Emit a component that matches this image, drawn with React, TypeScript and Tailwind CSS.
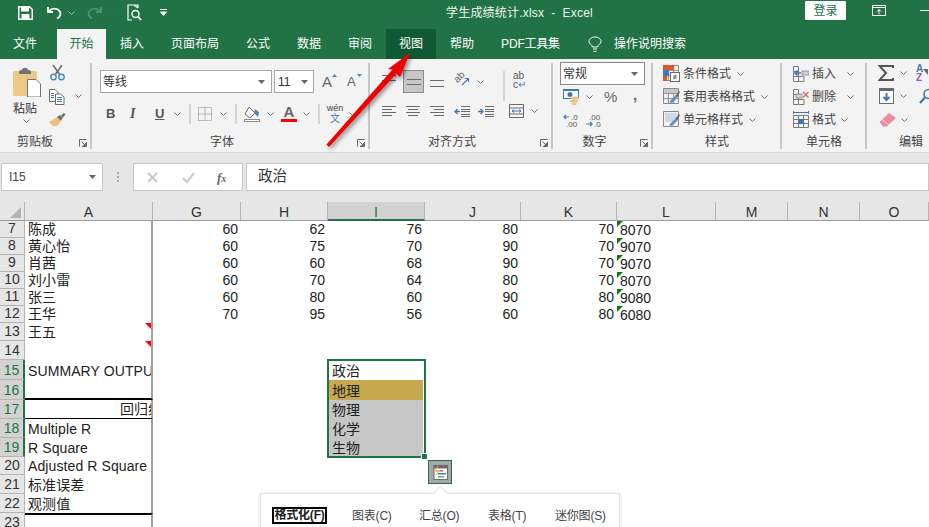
import type { ReactNode } from 'react';

const FONT = "font-['Liberation_Sans','Noto_Sans_CJK_SC',sans-serif]";

function Icon({ w, h, className = '', children }: { w: number; h: number; className?: string; children: ReactNode }) {
  return (
    <svg width={w} height={h} viewBox={`0 0 ${w} ${h}`} className={`shrink-0 block ${className}`} fill="none">
      {children}
    </svg>
  );
}

function Chevron({ className = '' }: { className?: string }) {
  return (
    <Icon w={7} h={4} className={className}>
      <path d="M0.5 0.5 L3.5 3.5 L6.5 0.5" stroke="#6a6a6a" strokeWidth="1" />
    </Icon>
  );
}

function Caret({ className = '' }: { className?: string }) {
  return (
    <Icon w={7} h={4} className={className}>
      <path d="M0 0 H7 L3.5 4 Z" fill="#666" />
    </Icon>
  );
}

function Launcher() {
  return (
    <Icon w={8} h={8}>
      <path d="M0.5 7.5 V0.5 H7.5 M7.5 3 V7.5 H3 M2.5 2.5 L6.5 6.5 M6.5 4 V6.5 H4" stroke="#666" strokeWidth="1" />
    </Icon>
  );
}

function Lines({ rows, color = '#6a6a6a' }: { rows: [number, number, number][]; color?: string }) {
  return (
    <>
      {rows.map(([x, y, w], i) => (
        <rect key={i} x={x} y={y} width={w} height={1} fill={color} />
      ))}
    </>
  );
}

function CellGrid({ w = 16, h = 16 }: { w?: number; h?: number }) {
  return <path d={`M0.5 0.5 H${w - 0.5} V${h - 0.5} H0.5 Z M0.5 ${h / 3} H${w - 0.5} M0.5 ${(h * 2) / 3} H${w - 0.5} M${w / 3} 0.5 V${h - 0.5} M${(w * 2) / 3} 0.5 V${h - 0.5}`} stroke="#8a8a8a" strokeWidth="1" />;
}

function Brush() {
  return (
    <>
      <path d="M6 14 L12 8 L14 10 L9 15 Z" fill="#5b8fc7" />
      <path d="M12 8 L16 3 L17 4 L14 10 Z" fill="#6a6a6a" />
    </>
  );
}

function TitleBar() {
  return (
    <div className="h-[29px] pb-[4px] bg-[#217346] flex items-center text-white text-[12px]">
      <Icon w={15} h={14} className="ml-[18px]">
        <path d="M0.75 0.75 H11.5 L14.25 3.5 V13.25 H0.75 Z" stroke="#fff" strokeWidth="1.5" />
        <rect x="3" y="1" width="8" height="4.5" fill="#fff" />
        <rect x="3.5" y="8" width="8" height="5" fill="#fff" />
      </Icon>
      <Icon w={15} h={13} className="ml-[14px]">
        <path d="M1 1 V6 H6 M1.5 5.5 C4 2 10 1.5 12.5 5 C14.5 8 13 11 10 12.5" stroke="#fff" strokeWidth="1.8" />
      </Icon>
      <Chevron className="ml-[6px] opacity-70 brightness-200" />
      <Icon w={15} h={13} className="ml-[12px]">
        <path d="M14 1 V6 H9 M13.5 5.5 C11 2 5 1.5 2.5 5 C0.5 8 2 11 5 12.5" stroke="#4f9270" strokeWidth="1.8" />
      </Icon>
      <Chevron className="ml-[6px] opacity-40" />
      <Icon w={15} h={17} className="ml-[12px]">
        <path d="M11 4 V1 H1 V16 H5 M7 1 L11 4" stroke="#fff" strokeWidth="1.2" />
        <circle cx="8.5" cy="10" r="3.5" stroke="#fff" strokeWidth="1.4" />
        <path d="M11 12.5 L14 16" stroke="#fff" strokeWidth="1.8" />
      </Icon>
      <Icon w={7} h={7} className="ml-[18px]">
        <path d="M0 0.5 H7 M0.5 3 H6.5 L3.5 6.5 Z" stroke="#fff" strokeWidth="1" fill="#fff" />
      </Icon>
      <span className="ml-[279px] w-[146px] whitespace-nowrap tracking-[0.2px] text-[#eef5f0]">学生成绩统计.xlsx&nbsp; -&nbsp; Excel</span>
      <button className="ml-[213px] w-[46px] h-[19px] -mt-[4px] bg-white text-[#217346] text-[12px] rounded-[1px]">登录</button>
      <Icon w={14} h={11} className="ml-[26px] -mt-[5px]">
        <path d="M0.5 0.5 H13.5 V10.5 H0.5 Z M0.5 2.5 H13.5 M7 9 V4.5 M5 6.5 L7 4.5 L9 6.5" stroke="#fff" strokeWidth="1" />
      </Icon>
      <span className="ml-[34px] -mt-[5px] w-[10px] h-px bg-white" />
    </div>
  );
}

const TABS = ['插入', '页面布局', '公式', '数据', '审阅'];

function Tabs() {
  return (
    <div className="h-[30px] bg-[#217346] flex text-white text-[12px] leading-[30px]">
      <span className="px-[13px]">文件</span>
      <span className="ml-[7px] w-[49px] text-center bg-[#f3f3f3] text-[#217346]">开始</span>
      {TABS.map((t) => (
        <span key={t} className="ml-px px-[13px]">{t}</span>
      ))}
      <span className="ml-px w-[50px] text-center bg-[#0f5a33]">视图</span>
      <span className="ml-px px-[13px]">帮助</span>
      <span className="ml-px w-[84px] pl-[13px] whitespace-nowrap tracking-[-0.2px]">PDF工具集</span>
      <Icon w={14} h={17} className="ml-[16px] mt-[7px]">
        <path d="M4.5 11 C4 8.5 1 8 1 5.5 C1 3 3.5 1 7 1 C10.5 1 13 3 13 5.5 C13 8 10 8.5 9.5 11 Z M5 13 H9 M5.5 15.5 H8.5" stroke="#fff" strokeWidth="1" />
      </Icon>
      <span className="ml-[12px]">操作说明搜索</span>
    </div>
  );
}

function GroupLabel({ label, launcher, className = '' }: { label: string; launcher?: boolean; className?: string }) {
  return (
    <div className="h-[13px] flex items-center text-[12px] leading-[13px] text-[#444]">
      <span className={`flex-1 text-center ${className}`}>{label}</span>
      {launcher && (
        <span className="mr-[3px] mt-px">
          <Launcher />
        </span>
      )}
    </div>
  );
}

function ClipboardGroup() {
  return (
    <div className="w-[92px] h-[86px] border-r-2 border-[#c6c6c6] flex flex-col">
      <div className="h-[73px] flex">
        <div className="w-[49px] pl-[13px] pt-[4px] flex flex-col">
          <Icon w={28} h={30}>
            <rect x="0" y="4" width="24" height="25" rx="1.5" fill="#edc987" />
            <path d="M6 5 C6 3 8 3 9 3 C9 0 15 0 15 3 C16 3 18 3 18 5 V7 H6 Z" fill="#737373" />
            <path d="M14.5 12.5 H23 L27.5 17 V30 H14.5 Z" fill="#fff" stroke="#737373" strokeWidth="1" />
          </Icon>
          <span className="text-[12px] leading-[14px] mt-[5px] text-[#333]">粘贴</span>
          <Chevron className="ml-[10px] mt-[3px]" />
        </div>
        <div className="flex flex-col">
          <Icon w={15} h={16} className="mt-[2px] ml-[1px]">
            <path d="M3 0 L10 10 M12 0 L5 10" stroke="#6a6a6a" strokeWidth="1.5" />
            <circle cx="3.5" cy="12" r="2.7" stroke="#4f86c0" strokeWidth="1.4" />
            <circle cx="11.5" cy="12" r="2.7" stroke="#4f86c0" strokeWidth="1.4" />
          </Icon>
          <div className="flex items-center mt-[8px]">
            <Icon w={16} h={16}>
              <path d="M0.5 0.5 H6 L9 3.5 V12.5 H0.5 Z" fill="#fff" stroke="#6a6a6a" />
              <path d="M6.5 5 H11.5 L15 8 V15.5 H6.5 Z" fill="#fff" stroke="#6a6a6a" />
              <Lines rows={[[2, 4, 3], [2, 6, 3], [2, 8, 3], [8, 8, 5], [8, 10, 5], [8, 12, 5]]} color="#3f78b5" />
            </Icon>
            <Chevron className="ml-[10px] -mt-[3px]" />
          </div>
          <Icon w={17} h={14} className="mt-[8px]">
            <path d="M0 9 L8 4 L12 8 L8 13 C5 14 2 12 0 9 Z" fill="#e8c27f" />
            <path d="M8 4 L11 2 L13.5 5 L12 8 Z" fill="#6a6a6a" />
            <path d="M12 2.5 L15 0 L16.5 1.5 L13.5 5 Z" fill="#6a6a6a" />
          </Icon>
        </div>
      </div>
      <GroupLabel label="剪贴板" launcher className="pr-[9px]" />
    </div>
  );
}

function FontGroup() {
  return (
    <div className="w-[278px] h-[86px] border-r-2 border-[#c6c6c6] flex flex-col">
      <div className="h-[73px] flex flex-col pt-[7px]">
        <div className="flex items-center h-[23px]">
          <div className="ml-[8px] w-[172px] h-[23px] bg-white border border-[#a6a6a6] flex items-center pl-[2px] pr-[6px] text-[12px] text-[#333]">
            <span className="flex-1">等线</span>
            <Caret />
          </div>
          <div className="ml-[2px] w-[40px] h-[23px] bg-white border border-[#a6a6a6] flex items-center pl-[3px] pr-[5px] text-[12px] text-[#333]">
            <span className="flex-1">11</span>
            <Caret />
          </div>
          <span className="ml-[8px] relative w-[14px] text-[15px] leading-[20px] text-[#666]">
            A
            <Icon w={5} h={3} className="absolute right-[-1px] top-[2px]"><path d="M0 3 L2.5 0 L5 3 Z" fill="#4f86c0" /></Icon>
          </span>
          <span className="ml-[11px] relative w-[12px] text-[13px] leading-[20px] text-[#666]">
            A
            <Icon w={5} h={3} className="absolute right-[-3px] top-[2px]"><path d="M0 0 L2.5 3 L5 0 Z" fill="#4f86c0" /></Icon>
          </span>
        </div>
        <div className="flex items-center h-[23px] mt-[9px] text-[#555]">
          <span className="ml-[14px] w-[9px] text-[13px] font-bold leading-none">B</span>
          <span className="ml-[15px] w-[8px] text-[14px] italic font-['Liberation_Serif',serif] font-bold leading-none">I</span>
          <span className="ml-[17px] w-[10px] text-[13px] font-bold underline leading-none">U</span>
          <Chevron className="ml-[9px]" />
          <span className="ml-[8px] h-[20px] w-[2px] bg-[#d4d4d4]" />
          <Icon w={14} h={14} className="ml-[7px]">
            <path d="M0.5 0.5 H13.5 V13.5 H0.5 Z M7 0.5 V13.5 M0.5 7 H13.5" stroke="#808080" strokeWidth="1" strokeDasharray="1 1" />
          </Icon>
          <Chevron className="ml-[8px]" />
          <span className="ml-[8px] h-[20px] w-[2px] bg-[#d4d4d4]" />
          <Icon w={16} h={16} className="ml-[7px]">
            <path d="M5 1 L11 7 L6 12 L1 8 Z" stroke="#6a6a6a" strokeWidth="1" fill="#fff" />
            <path d="M11 3 L15 6 L14 11 L10 7 Z" fill="#4f86c0" />
            <rect x="0.5" y="13.5" width="15" height="2" stroke="#8a8a8a" fill="#fff" />
          </Icon>
          <Chevron className="ml-[7px]" />
          <span className="ml-[7px] w-[16px] flex flex-col items-center">
            <span className="text-[15px] leading-[14px] font-bold text-[#666]">A</span>
            <span className="w-[16px] h-[3px] bg-[#ff0000]" />
          </span>
          <Chevron className="ml-[6px]" />
          <span className="ml-[8px] h-[20px] w-[2px] bg-[#d4d4d4]" />
          <span className="ml-[6px] w-[18px] flex flex-col items-center">
            <span className="text-[9px] leading-[10px] text-[#444]">wén</span>
            <span className="text-[10px] leading-[11px] text-[#3f78b5]">文</span>
          </span>
          <Chevron className="ml-[5px]" />
        </div>
      </div>
      <GroupLabel label="字体" launcher className="pr-[5px]" />
    </div>
  );
}

function AlignGroup() {
  return (
    <div className="w-[183px] h-[86px] border-r-2 border-[#c6c6c6] flex flex-col">
      <div className="h-[73px] flex flex-col pt-[7px]">
        <div className="flex items-center h-[23px]">
          <Icon w={14} h={14} className="ml-[12px] -mt-[9px]"><Lines rows={[[0, 5, 14], [0, 10, 14]]} /></Icon>
          <span className="ml-[7px] w-[21px] h-[23px] bg-[#c6c6c6] border border-[#8a8a8a] flex items-center justify-center">
            <Icon w={14} h={6}><Lines rows={[[0, 0, 14], [0, 5, 14]]} /></Icon>
          </span>
          <Icon w={14} h={8} className="ml-[6px] mt-[4px]"><Lines rows={[[0, 0, 14], [0, 6, 14]]} /></Icon>
          <Icon w={16} h={16} className="ml-[10px] -mt-[4px]">
            <text x="1" y="9" fontSize="10" fill="#666" fontFamily="Liberation Sans" transform="rotate(-45 5 7)">ab</text>
            <path d="M8 13 L14 7 M11 6.5 H14.5 V10" stroke="#3f78b5" strokeWidth="1.1" />
          </Icon>
          <Chevron className="ml-[7px]" />
          <span className="ml-[19px] h-[30px] w-[2px] bg-[#d4d4d4] mt-[8px]" />
          <span className="ml-[8px] w-[14px] flex flex-col text-[10px] leading-[9px] text-[#555] -mt-[4px]">
            <span>ab</span>
            <span>c<span className="text-[#3f78b5]">↵</span></span>
          </span>
        </div>
        <div className="flex items-center h-[14px] mt-[11px]">
          <Icon w={14} h={10} className="ml-[12px]"><Lines rows={[[0, 0, 14], [0, 3, 10], [0, 6, 14], [0, 9, 10]]} /></Icon>
          <Icon w={14} h={10} className="ml-[10px]"><Lines rows={[[0, 0, 14], [2, 3, 10], [0, 6, 14], [2, 9, 10]]} /></Icon>
          <Icon w={14} h={10} className="ml-[10px]"><Lines rows={[[0, 0, 14], [4, 3, 10], [0, 6, 14], [4, 9, 10]]} /></Icon>
          <Icon w={16} h={11} className="ml-[10px]">
            <Lines rows={[[7, 0, 9], [7, 5, 9], [7, 10, 9], [7, 3, 9], [7, 8, 9]]} />
            <path d="M6 5.5 H1 M3.5 3 L1 5.5 L3.5 8" stroke="#3f78b5" strokeWidth="1.3" />
          </Icon>
          <Icon w={16} h={11} className="ml-[8px]">
            <Lines rows={[[7, 0, 9], [7, 5, 9], [7, 10, 9], [7, 3, 9], [7, 8, 9]]} />
            <path d="M0 5.5 H5 M2.5 3 L5 5.5 L2.5 8" stroke="#3f78b5" strokeWidth="1.3" />
          </Icon>
          <Icon w={15} h={14} className="ml-[15px]">
            <path d="M0.5 0.5 H14.5 V13.5 H0.5 Z M0.5 4 H14.5 M0.5 10 H14.5" stroke="#6a6a6a" strokeWidth="1" />
            <path d="M3 7 H12 M5 5.5 L3 7 L5 8.5 M10 5.5 L12 7 L10 8.5" stroke="#3f78b5" strokeWidth="1" />
          </Icon>
          <Chevron className="ml-[7px]" />
        </div>
      </div>
      <GroupLabel label="对齐方式" launcher className="pr-[6px]" />
    </div>
  );
}

function NumberGroup() {
  return (
    <div className="w-[100px] h-[86px] border-r-2 border-[#c6c6c6] flex flex-col">
      <div className="h-[73px] flex flex-col">
        <div className="ml-[7px] mt-[-1px] w-[85px] h-[23px] bg-white border border-[#8a8a8a] flex items-center pl-[2px] pr-[6px] text-[12px] text-[#333]">
          <span className="flex-1">常规</span>
          <Caret />
        </div>
        <div className="flex items-center h-[17px] mt-[3px]">
          <Icon w={16} h={16} className="ml-[10px]">
            <rect x="0.5" y="0.5" width="15" height="9" stroke="#3f78b5" fill="#fff" />
            <rect x="0" y="0" width="16" height="2" fill="#3f78b5" />
            <circle cx="7" cy="5.5" r="2.5" fill="#3f78b5" />
            <ellipse cx="12" cy="9" rx="4" ry="1.6" fill="#edc07a" />
            <ellipse cx="11" cy="12" rx="4" ry="1.6" fill="#edc07a" />
            <ellipse cx="11" cy="15" rx="3" ry="1" fill="#edc07a" />
          </Icon>
          <Chevron className="ml-[7px]" />
          <span className="ml-[11px] w-[14px] text-[15px] leading-none text-[#666]">%</span>
          <span className="ml-[15px] text-[15px] font-bold leading-none text-[#666] -mt-[4px]">,</span>
        </div>
        <div className="flex items-center h-[15px] mt-[8px]">
          <Icon w={16} h={15} className="ml-[10px]">
            <path d="M6 4 H1 M3 2 L1 4 L3 6" stroke="#3f78b5" strokeWidth="1.2" />
            <text x="8" y="7" fontSize="8" fill="#555" fontFamily="Liberation Sans">.0</text>
            <text x="3" y="14" fontSize="8" fill="#555" fontFamily="Liberation Sans">.00</text>
          </Icon>
          <Icon w={16} h={15} className="ml-[7px]">
            <text x="3" y="7" fontSize="8" fill="#555" fontFamily="Liberation Sans">.00</text>
            <path d="M0 11 H6 M4 9 L6 11 L4 13" stroke="#3f78b5" strokeWidth="1.2" />
            <text x="8" y="14" fontSize="8" fill="#555" fontFamily="Liberation Sans">.0</text>
          </Icon>
        </div>
      </div>
      <GroupLabel label="数字" launcher className="pr-[4px]" />
    </div>
  );
}

function StyleRow({ icon, label }: { icon: ReactNode; label: string }) {
  return (
    <div className="flex items-center h-[23px] text-[12px] text-[#444]">
      {icon}
      <span className="ml-[3px] mr-[6px]">{label}</span>
      <Chevron />
    </div>
  );
}

function StyleGroup() {
  return (
    <div className="w-[129px] h-[86px] border-r-2 border-[#c6c6c6] flex flex-col">
      <div className="h-[73px] pl-[10px] flex flex-col">
        <div className="-mt-px flex flex-col">
          <StyleRow
            label="条件格式"
            icon={
              <Icon w={17} h={17}>
                <CellGrid />
                <rect x="0" y="0" width="11" height="5" fill="#d9582f" />
                <rect x="0" y="5" width="6" height="6" fill="#3f78b5" />
                <rect x="0" y="11" width="4" height="5" fill="#d9582f" />
                <rect x="7.5" y="7.5" width="9" height="9" fill="#fff" stroke="#6a6a6a" />
                <path d="M10 11 H14 M10 13 H14 M13 9.5 L11 14.5" stroke="#555" strokeWidth="0.8" />
              </Icon>
            }
          />
          <StyleRow
            label="套用表格格式"
            icon={
              <Icon w={17} h={17}>
                <CellGrid />
                <rect x="1" y="1" width="14" height="4" fill="#c9c9c9" />
                <Brush />
              </Icon>
            }
          />
          <StyleRow
            label="单元格样式"
            icon={
              <Icon w={17} h={17}>
                <path d="M0.5 0.5 H15.5 V15.5 H0.5 Z" stroke="#8a8a8a" />
                <rect x="2" y="2" width="12" height="9" fill="#cfd8e6" />
                <Brush />
              </Icon>
            }
          />
        </div>
      </div>
      <GroupLabel label="样式" className="pl-px" />
    </div>
  );
}

function CellRow({ icon, label, gap }: { icon: ReactNode; label: string; gap: string }) {
  return (
    <div className="flex items-center h-[23px] text-[12px] text-[#444]">
      {icon}
      <span className={`ml-[3px] ${gap}`}>{label}</span>
      <Chevron />
    </div>
  );
}

function CellsGroup() {
  return (
    <div className="w-[85px] h-[86px] border-r-2 border-[#c6c6c6] flex flex-col">
      <div className="h-[73px] pl-[11px] flex flex-col">
        <div className="-mt-px flex flex-col">
          <CellRow
            label="插入"
            gap="mr-[11px]"
            icon={
              <Icon w={16} h={16}>
                <path d="M0.5 0.5 H5.5 V15.5 H0.5 Z M0.5 5.5 H5.5 M0.5 10.5 H11 V15.5 H5.5" stroke="#7a7a7a" />
                <rect x="9" y="5" width="7" height="4" fill="#c9d3e0" stroke="#7a7a7a" strokeWidth="0.7" />
                <path d="M8 7 H2 M4.5 4.5 L2 7 L4.5 9.5" stroke="#3f78b5" strokeWidth="1.5" />
              </Icon>
            }
          />
          <CellRow
            label="删除"
            gap="mr-[11px]"
            icon={
              <Icon w={16} h={16}>
                <path d="M0.5 0.5 H5.5 V15.5 H0.5 Z M0.5 5.5 H5.5 M0.5 10.5 H11 V15.5 H5.5" stroke="#7a7a7a" />
                <rect x="3" y="5" width="6" height="4" fill="#c9d3e0" stroke="#7a7a7a" strokeWidth="0.7" />
                <path d="M10 3 L15.5 8.5 M15.5 3 L10 8.5" stroke="#e0705a" strokeWidth="1.5" />
              </Icon>
            }
          />
          <CellRow
            label="格式"
            gap="mr-[5px]"
            icon={
              <Icon w={16} h={17}>
                <path d="M0.5 0 V3 M15.5 0 V3 M1 1.5 H15" stroke="#3f78b5" strokeWidth="1" />
                <path d="M0.5 4.5 H15.5 V16.5 H0.5 Z M0.5 8.5 H15.5 M0.5 12.5 H15.5 M5.5 4.5 V16.5 M10.5 4.5 V16.5" stroke="#7a7a7a" />
                <rect x="5" y="8" width="6" height="5" fill="#3f78b5" />
              </Icon>
            }
          />
        </div>
      </div>
      <GroupLabel label="单元格" className="pl-px" />
    </div>
  );
}

function EditGroup() {
  return (
    <div className="w-[62px] h-[86px] flex flex-col overflow-hidden">
      <div className="h-[73px] pl-[11px] flex flex-col">
        <div className="flex items-center h-[18px] mt-[1px]">
          <Icon w={16} h={16}>
            <path d="M15 3 V1 H1.5 L8 8 L1.5 15 H15 V13" stroke="#555" strokeWidth="2" />
          </Icon>
          <Chevron className="ml-[6px]" />
          <span className="ml-[9px] flex flex-col items-start text-[10px] leading-[9px] font-bold">
            <span className="text-[#3f78b5]">A</span>
            <span className="text-[#8e5bb5]">Z</span>
          </span>
          <Icon w={5} h={6} className="-mt-[3px]"><path d="M0 0 H5 V6 L2.5 3 Z" fill="#6a6a6a" /></Icon>
        </div>
        <div className="flex items-center h-[17px] mt-[5px]">
          <Icon w={15} h={16} className="ml-px">
            <rect x="0.5" y="0.5" width="14" height="15" stroke="#6a6a6a" fill="#fff" />
            <rect x="0" y="0" width="15" height="3" fill="#6a6a6a" />
            <path d="M7.5 5 V12 M4.5 9 L7.5 12 L10.5 9" stroke="#3f78b5" strokeWidth="2" />
          </Icon>
          <Chevron className="ml-[6px]" />
          <Icon w={16} h={16} className="ml-[12px]">
            <circle cx="9.5" cy="6" r="4.5" stroke="#3f78b5" strokeWidth="1.6" />
            <path d="M6 9.5 L1 15" stroke="#3f78b5" strokeWidth="2.2" />
          </Icon>
        </div>
        <div className="flex items-center h-[15px] mt-[8px]">
          <Icon w={18} h={15} className="ml-px">
            <path d="M0.5 10 L10 1 L17 6 L8 14.5 H4 Z" fill="#ea8da0" />
            <path d="M3 7.5 L10 13" stroke="#f8d9df" strokeWidth="1" />
          </Icon>
          <Chevron className="ml-[4px]" />
        </div>
      </div>
      <GroupLabel label="编辑" className="pl-[26px]" />
    </div>
  );
}

function Ribbon() {
  return (
    <div className="h-[94px] pt-[4px] bg-[#f3f3f3] flex border-b border-[#d6d6d6]">
      <ClipboardGroup />
      <FontGroup />
      <AlignGroup />
      <NumberGroup />
      <StyleGroup />
      <CellsGroup />
      <EditGroup />
    </div>
  );
}

function FormulaBar() {
  return (
    <div className="h-[49px] bg-[#e6e6e6] pt-[10px] flex">
      <div className="ml-px w-[102px] h-[28px] bg-white border border-[#c6c6c6] flex items-center pl-[7px] pr-[6px] text-[12px] text-[#444]">
        <span className="flex-1">I15</span>
        <Caret />
      </div>
      <div className="ml-[14px] w-[3px] h-[10px] mt-[9px] flex flex-col justify-between">
        <span className="w-[2px] h-[2px] bg-[#a6a6a6]" />
        <span className="w-[2px] h-[2px] bg-[#a6a6a6]" />
        <span className="w-[2px] h-[2px] bg-[#a6a6a6]" />
      </div>
      <div className="ml-[13px] w-[110px] h-[28px] bg-white border border-[#c6c6c6] flex items-center">
        <Icon w={11} h={11} className="ml-[13px]">
          <path d="M1 1 L10 10 M10 1 L1 10" stroke="#c6c6c6" strokeWidth="1.8" />
        </Icon>
        <Icon w={13} h={11} className="ml-[24px]">
          <path d="M1 6 L5 10 L12 1" stroke="#c6c6c6" strokeWidth="2" />
        </Icon>
        <span className="ml-[22px] text-[13px] italic font-bold font-['Liberation_Serif',serif] text-[#666] leading-none">
          f<span className="text-[10px]">x</span>
        </span>
      </div>
      <div className="ml-[3px] flex-1 h-[28px] bg-white border border-[#c6c6c6] flex items-center pl-[11px] text-[14.5px] text-[#333]">
        政治
      </div>
    </div>
  );
}

function ColHead({ label, width, active }: { label: string; width: string; active?: boolean }) {
  return (
    <div className={`${width} h-[19px] border-r border-[#b4b4b4] text-center text-[14px] leading-[20px] ${active ? 'bg-[#d2d2d2] text-[#217346] border-b-2 border-b-[#217346]' : 'border-b border-b-[#9b9b9b] text-[#333]'}`}>
      {label}
    </div>
  );
}

function ColumnHeader() {
  return (
    <div className="flex h-[19px] bg-[#e6e6e6]">
      <div className="w-[25px] h-[19px] border-r border-b border-[#b4b4b4] border-b-[#9b9b9b] flex items-end justify-end pr-[3px] pb-[2px]">
        <Icon w={11} h={11}><path d="M11 0 V11 H0 Z" fill="#b4b4b4" /></Icon>
      </div>
      <ColHead label="A" width="w-[128px]" />
      <ColHead label="G" width="w-[88px]" />
      <ColHead label="H" width="w-[87px]" />
      <ColHead label="I" width="w-[97px]" active />
      <ColHead label="J" width="w-[96px]" />
      <ColHead label="K" width="w-[96px]" />
      <ColHead label="L" width="w-[99px]" />
      <ColHead label="M" width="w-[72px]" />
      <ColHead label="N" width="w-[72px]" />
      <ColHead label="O" width="w-[69px]" />
    </div>
  );
}

type Row = {
  n: number;
  height: string;
  name?: string;
  nameClass?: string;
  nums?: number[];
  l?: string;
  sel?: boolean;
  rule?: string;
  note?: boolean;
  pick?: string;
  pickClass?: string;
};

const ROWS: Row[] = [
  { n: 7, height: 'h-[17px]', name: '陈成', nums: [60, 62, 76, 80, 70], l: '8070' },
  { n: 8, height: 'h-[17px]', name: '黄心怡', nums: [60, 75, 70, 90, 70], l: '9070' },
  { n: 9, height: 'h-[17px]', name: '肖茜', nums: [60, 60, 68, 90, 70], l: '9070' },
  { n: 10, height: 'h-[17px]', name: '刘小雷', nums: [60, 70, 64, 80, 70], l: '8070' },
  { n: 11, height: 'h-[17px]', name: '张三', nums: [60, 80, 60, 90, 80], l: '9080' },
  { n: 12, height: 'h-[17px]', name: '王华', nums: [70, 95, 56, 60, 80], l: '6080' },
  { n: 13, height: 'h-[18px]', name: '王五', note: true },
  { n: 14, height: 'h-[19px]', note: true },
  { n: 15, height: 'h-[20px]', name: 'SUMMARY OUTPUT', sel: true, pick: '政治', pickClass: 'bg-white' },
  { n: 16, height: 'h-[20px]', sel: true, rule: 'border-b-2 border-b-black', pick: '地理', pickClass: 'bg-[#c6a84f]' },
  { n: 17, height: 'h-[19px]', name: '回归统计', nameClass: 'pl-[95px]', sel: true, rule: 'border-b border-b-black', pick: '物理', pickClass: 'bg-[#c6c6c6]' },
  { n: 18, height: 'h-[19px]', name: 'Multiple R', sel: true, pick: '化学', pickClass: 'bg-[#c6c6c6]' },
  { n: 19, height: 'h-[19px]', name: 'R Square', sel: true, pick: '生物', pickClass: 'bg-[#c6c6c6]' },
  { n: 20, height: 'h-[18px]', name: 'Adjusted R Square' },
  { n: 21, height: 'h-[19px]', name: '标准误差' },
  { n: 22, height: 'h-[19px]', name: '观测值' },
  { n: 23, height: 'h-[19px]', rule: 'border-t-2 border-t-black' },
];

const NUM_COLS = ['w-[88px]', 'w-[87px]', 'w-[97px]', 'w-[96px]', 'w-[96px]'];

function SheetRow({ row }: { row: Row }) {
  return (
    <div className={`flex ${row.height} leading-[17px] text-[14px] text-[#222]`}>
      <div className={`w-[25px] flex items-end justify-center border-b border-[#b4b4b4] ${row.sel ? 'bg-[#d2d2d2] text-[#217346] border-r-2 border-r-[#217346]' : 'bg-[#e6e6e6] text-[#333] border-r border-r-[#b4b4b4]'}`}>
        {row.n}
      </div>
      <div className={`relative w-[128px] flex items-end border-r-2 border-r-[#a0a0a0] overflow-hidden whitespace-nowrap pl-[3px] tracking-[0.1px] ${row.nameClass ?? ''} ${row.rule ?? ''}`}>
        {row.name}
        {row.note && (
          <Icon w={6} h={6} className="absolute right-0 top-0">
            <path d="M0 0 H6 V6 Z" fill="#ff0000" />
          </Icon>
        )}
      </div>
      {row.nums?.map((v, i) => (
        <div key={i} className={`${NUM_COLS[i]} pr-[3px] flex items-end justify-end`}>{v}</div>
      ))}
      {row.l && (
        <div className="relative w-[99px] pl-[3px] -mb-px flex items-end">
          <Icon w={6} h={6} className="absolute left-0 top-0">
            <path d="M0 0 H6 L0 6 Z" fill="#0a7a0a" />
          </Icon>
          {row.l}
        </div>
      )}
      {row.pick && (
        <>
          <div className="w-[175px]" />
          <div className={`w-[95px] pl-[4px] flex items-end ${row.pickClass}`}>{row.pick}</div>
        </>
      )}
    </div>
  );
}

function Sheet() {
  return (
    <div className="relative">
      <ColumnHeader />
      {ROWS.map((r) => (
        <SheetRow key={r.n} row={r} />
      ))}
      {/* selection box around I15:I19 */}
      <div className="absolute left-[327px] top-[157px] w-[99px] h-[99px] border-2 border-[#217346]" />
      <div className="absolute left-[421px] top-[251px] w-[5px] h-[5px] bg-[#217346] border border-white box-content" />
      <div className="absolute left-[428px] top-[258px] w-[24px] h-[24px] bg-[#a6a6a6] border border-[#217346] flex items-center justify-center">
        <Icon w={15} h={15}>
          <rect x="1" y="0.5" width="13.5" height="14" fill="#fff" stroke="#6a6a6a" />
          <rect x="1" y="0.5" width="13.5" height="3" fill="#6a6a6a" />
          <rect x="5" y="5" width="5" height="1.5" fill="#d9582f" />
          <rect x="5" y="8" width="8" height="1.5" fill="#3f78b5" />
          <rect x="5" y="11" width="6" height="1.5" fill="#5fa58a" />
          <path d="M5 0 L1 7 H4 L2 12 L7 5 H4 Z" fill="#edc07a" />
        </Icon>
      </div>
      <QuickAnalysis />
    </div>
  );
}

function QuickAnalysis() {
  return (
    <div className="absolute left-[260px] top-[291px] w-[360px] h-[60px] bg-white border border-[#e2e2e2] shadow-[0_1px_4px_rgba(0,0,0,0.12)] flex text-[12px] text-[#444] pt-[13px] whitespace-nowrap tracking-[-0.2px]">
      <div className="absolute left-[174px] -top-[6px] w-[11px] h-[11px] rotate-45 bg-white border-l border-t border-[#e2e2e2]" />
      <span className="ml-[11px] w-[55px] h-[17px] text-center leading-[13px] border-2 border-black font-bold text-[#222]">格式化(F)</span>
      <span className="ml-[25px] w-[40px]">图表(C)</span>
      <span className="ml-[27px] w-[42px]">汇总(O)</span>
      <span className="ml-[27px] w-[40px]">表格(T)</span>
      <span className="ml-[27px] w-[52px]">迷你图(S)</span>
    </div>
  );
}

function RedArrow() {
  return (
    <svg width="929" height="527" className="absolute left-0 top-0 pointer-events-none drop-shadow-[2px_2px_2px_rgba(0,0,0,0.45)]">
      <path d="M410 53 L400 77 L396.5 73.5 L329 147 L326.5 144.5 L392.5 69.5 L388 69 Z" fill="#ee0000" />
    </svg>
  );
}

export default function App() {
  return (
    <div className={`relative w-[929px] h-[527px] overflow-hidden bg-white ${FONT}`}>
      <TitleBar />
      <Tabs />
      <Ribbon />
      <FormulaBar />
      <Sheet />
      <RedArrow />
    </div>
  );
}
